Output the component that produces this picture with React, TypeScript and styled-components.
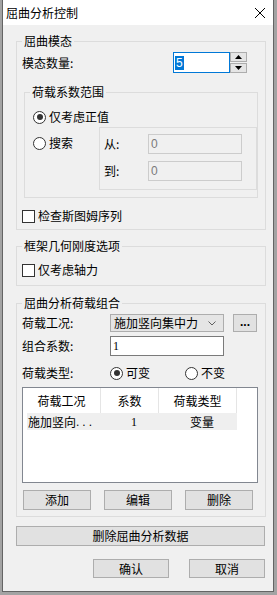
import styled, { createGlobalStyle } from 'styled-components';

const Global = createGlobalStyle`
  html, body {
    margin: 0;
    height: 100%;
    background: #a3a3a3;
  }
  body {
    font-family: "Noto Sans CJK SC", "Noto Sans", sans-serif;
    font-size: 12px;
    line-height: 14px;
    color: #000;
  }
  * { box-sizing: border-box; }
`;

const Window = styled.div`
  margin-left: 2px;
  width: 272px;
  height: 592px;
  border: 1px solid #646464;
  border-top: none;
  display: flex;
  flex-direction: column;
`;

const TitleBar = styled.div`
  height: 25px;
  background: #fff;
  display: flex;
  align-items: center;
  padding-left: 3px;
  padding-right: 8px;
`;

const Title = styled.div`
  flex: 1;
`;

const Content = styled.div`
  flex: 1;
  background: #f0f0f0;
  padding: 9px 7px 0 13px;
  display: flex;
  flex-direction: column;
`;

const Group = styled.fieldset<{ $pad: string; $mt?: number; $ml?: number }>`
  margin: ${(p) => p.$mt ?? 0}px 0 0 ${(p) => p.$ml ?? 0}px;
  border: 1px solid #dcdcdc;
  padding: ${(p) => p.$pad};
  min-width: 0;
  display: flex;
  flex-direction: column;
`;

const Legend = styled.legend`
  padding: 0 2px;
  font-size: 12px;
  line-height: 14px;
`;

const Row = styled.div<{ $h: number; $mt?: number }>`
  display: flex;
  align-items: center;
  height: ${(p) => p.$h}px;
  margin-top: ${(p) => p.$mt ?? 0}px;
`;

const Label = styled.span<{ $w: number }>`
  width: ${(p) => p.$w}px;
  flex: none;
  white-space: nowrap;
`;

const SpinInput = styled.div`
  width: 57px;
  height: 21px;
  border: 1px solid #0078d7;
  background: #fff;
  display: flex;
  align-items: center;
  padding-left: 1px;
`;

const Selected = styled.span`
  background: #0078d7;
  color: #fff;
  padding: 0 1px;
  font-family: "Liberation Sans", sans-serif;
  line-height: 14px;
`;

const SpinButtons = styled.div`
  width: 17px;
  height: 21px;
  display: flex;
  flex-direction: column;
  gap: 1px;
`;

const SpinBtn = styled.div`
  flex: 1;
  border: 1px solid #adadad;
  background: #e5e5e5;
  display: flex;
  align-items: center;
  justify-content: center;
`;

const Radio = styled.span<{ $on?: boolean }>`
  width: 13px;
  height: 13px;
  border: 1px solid #333;
  border-radius: 50%;
  background: #fff;
  display: inline-flex;
  align-items: center;
  justify-content: center;
  flex: none;
  &::after {
    content: '';
    width: 6px;
    height: 6px;
    border-radius: 50%;
    background: ${(p) => (p.$on ? '#333' : 'transparent')};
  }
`;

const Check = styled.span`
  width: 13px;
  height: 13px;
  border: 1px solid #333;
  background: #fff;
  flex: none;
`;

const Choice = styled.label<{ $w?: number; $pl?: number }>`
  display: flex;
  align-items: center;
  gap: 3px;
  height: 18px;
  width: ${(p) => (p.$w ? `${p.$w}px` : 'auto')};
  padding-left: ${(p) => p.$pl ?? 0}px;
`;

const SearchArea = styled.div`
  display: flex;
  margin-top: 1px;
`;

const SearchSide = styled.div`
  width: 69px;
  padding-top: 7px;
`;

const RangeBox = styled.div`
  flex: 1;
  border: 1px solid #dcdcdc;
  padding: 6px 14px 8px 4px;
  display: flex;
  flex-direction: column;
  gap: 7px;
`;

const DisabledInput = styled.div`
  width: 94px;
  height: 20px;
  border: 1px solid #cccccc;
  background: #f0f0f0;
  color: #7a7a7a;
  padding-left: 2px;
  display: flex;
  align-items: center;
  font-family: "Liberation Sans", sans-serif;
`;

const Select = styled.div`
  width: 114px;
  height: 18px;
  border: 1px solid #adadad;
  background: #e5e5e5;
  display: flex;
  align-items: center;
  justify-content: space-between;
  padding: 0 7px 0 3px;
`;

const TextInput = styled.div`
  width: 114px;
  height: 20px;
  border: 1px solid #7a7a7a;
  background: #fff;
  padding-left: 2px;
  display: flex;
  align-items: center;
  font-family: "Liberation Serif", serif;
`;

const Button = styled.div<{ $w: number; $h?: number }>`
  width: ${(p) => p.$w}px;
  height: ${(p) => p.$h ?? 20}px;
  flex: none;
  border: 1px solid #adadad;
  background: #e1e1e1;
  display: flex;
  align-items: center;
  justify-content: center;
`;

const DotsButton = styled(Button)`
  margin-left: 9px;
  font-family: "Liberation Sans", sans-serif;
  font-weight: bold;
  padding-bottom: 3px;
`;

const ListBox = styled.div`
  width: 236px;
  height: 96px;
  margin-top: 5px;
  border: 1px solid #828790;
  background: #fff;
`;

const ListRow = styled.div<{ $head?: boolean }>`
  display: grid;
  grid-template-columns: 78px 58px 78px;
  height: ${(p) => (p.$head ? 25 : 17)}px;
  align-items: center;
  margin-left: ${(p) => (p.$head ? 0 : 4)}px;
  width: ${(p) => (p.$head ? 'auto' : '210px')};
  background: ${(p) => (p.$head ? '#fff' : '#efefef')};
`;

const Cell = styled.div<{ $sep?: boolean; $left?: boolean }>`
  height: 100%;
  display: flex;
  align-items: center;
  justify-content: ${(p) => (p.$left ? 'flex-start' : 'center')};
  border-right: ${(p) => (p.$sep ? '1px solid #e5e5e5' : 'none')};
  padding-left: ${(p) => (p.$left ? 1 : 0)}px;
  white-space: nowrap;
  overflow: hidden;
`;

const NumCell = styled(Cell)`
  font-family: "Liberation Serif", serif;
`;

const Dots = styled.span`
  letter-spacing: 3px;
  font-family: "Liberation Sans", sans-serif;
`;

const ButtonRow = styled.div<{ $gap: number; $mt: number; $end?: boolean; $pl?: number }>`
  display: flex;
  gap: ${(p) => p.$gap}px;
  margin-top: ${(p) => p.$mt}px;
  justify-content: ${(p) => (p.$end ? 'flex-end' : 'flex-start')};
  padding-left: ${(p) => p.$pl ?? 0}px;
  padding-right: ${(p) => (p.$end ? 1 : 0)}px;
`;

const Tri = ({ up }: { up?: boolean }) => (
  <svg width="7" height="4" viewBox="0 0 7 4">
    <path d={up ? 'M0 4 L3.5 0 L7 4 Z' : 'M0 0 L3.5 4 L7 0 Z'} fill="#000" />
  </svg>
);

const Chevron = () => (
  <svg width="8" height="5" viewBox="0 0 8 5">
    <path d="M0.5 0.5 L4 4 L7.5 0.5" fill="none" stroke="#606060" strokeWidth="1" />
  </svg>
);

const CloseIcon = () => (
  <svg width="10" height="10" viewBox="0 0 10 10">
    <path d="M0 0 L10 10 M10 0 L0 10" stroke="#000" strokeWidth="1" />
  </svg>
);

export default function App() {
  return (
    <>
      <Global />
      <Window>
        <TitleBar>
          <Title>屈曲分析控制</Title>
          <CloseIcon />
        </TitleBar>
        <Content>
          <Group $pad="4px 7px 5px 5px">
            <Legend>屈曲模态</Legend>
            <Row $h={21}>
              <Label $w={151}>模态数量:</Label>
              <SpinInput>
                <Selected>5</Selected>
              </SpinInput>
              <SpinButtons>
                <SpinBtn>
                  <Tri up />
                </SpinBtn>
                <SpinBtn>
                  <Tri />
                </SpinBtn>
              </SpinButtons>
            </Row>
            <Group $pad="9px 0 7px 5px" $mt={12} $ml={2}>
              <Legend>荷载系数范围</Legend>
              <Choice $pl={3}>
                <Radio $on />
                仅考虑正值
              </Choice>
              <SearchArea>
                <SearchSide>
                  <Choice $pl={3}>
                    <Radio />
                    搜索
                  </Choice>
                </SearchSide>
                <RangeBox>
                  <Row $h={20}>
                    <Label $w={44}>从:</Label>
                    <DisabledInput>0</DisabledInput>
                  </Row>
                  <Row $h={20}>
                    <Label $w={44}>到:</Label>
                    <DisabledInput>0</DisabledInput>
                  </Row>
                </RangeBox>
              </SearchArea>
            </Group>
            <Row $h={16} $mt={10}>
              <Choice>
                <Check />
                检查斯图姆序列
              </Choice>
            </Row>
          </Group>

          <Group $pad="9px 7px 7px 5px" $mt={9}>
            <Legend>框架几何刚度选项</Legend>
            <Row $h={16}>
              <Choice>
                <Check />
                仅考虑轴力
              </Choice>
            </Row>
          </Group>

          <Group $pad="4px 7px 6px 5px" $mt={10}>
            <Legend>屈曲分析荷载组合</Legend>
            <Row $h={18}>
              <Label $w={88}>荷载工况:</Label>
              <Select>
                <span>施加竖向集中力</span>
                <Chevron />
              </Select>
              <DotsButton $w={24} $h={18}>...</DotsButton>
            </Row>
            <Row $h={20} $mt={4}>
              <Label $w={88}>组合系数:</Label>
              <TextInput>1</TextInput>
            </Row>
            <Row $h={18} $mt={8}>
              <Label $w={88}>荷载类型:</Label>
              <Choice $w={75}>
                <Radio $on />
                可变
              </Choice>
              <Choice>
                <Radio />
                不变
              </Choice>
            </Row>
            <ListBox>
              <ListRow $head>
                <Cell $sep>荷载工况</Cell>
                <Cell $sep>系数</Cell>
                <Cell $sep>荷载类型</Cell>
              </ListRow>
              <ListRow>
                <Cell $left>
                  施加竖向<Dots>...</Dots>
                </Cell>
                <NumCell>1</NumCell>
                <Cell>变量</Cell>
              </ListRow>
            </ListBox>
            <ButtonRow $gap={13} $mt={7} $pl={1}>
              <Button $w={68}>添加</Button>
              <Button $w={68}>编辑</Button>
              <Button $w={68}>删除</Button>
            </ButtonRow>
          </Group>

          <ButtonRow $gap={0} $mt={9}>
            <Button $w={249}>删除屈曲分析数据</Button>
          </ButtonRow>
          <ButtonRow $gap={20} $mt={13} $end>
            <Button $w={76} $h={19}>确认</Button>
            <Button $w={76} $h={19}>取消</Button>
          </ButtonRow>
        </Content>
      </Window>
    </>
  );
}
